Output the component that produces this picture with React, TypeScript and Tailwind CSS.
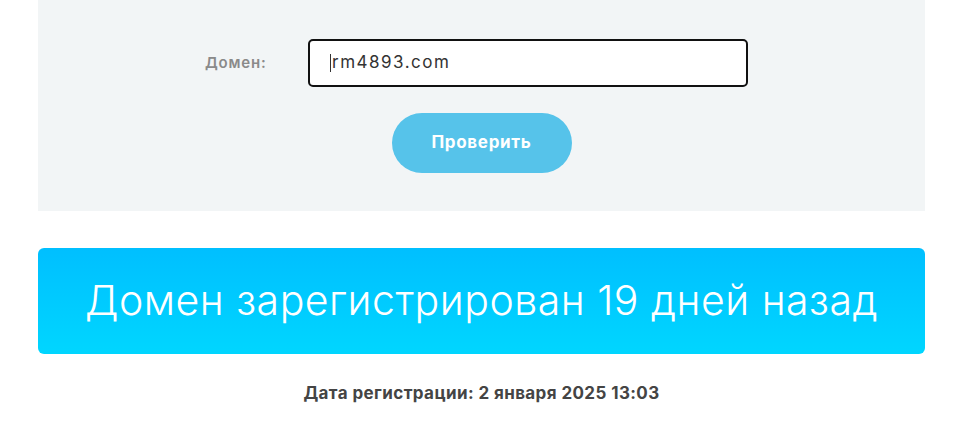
export default function App() {
  return (
    <div className="min-h-[446px] bg-white font-['Inter','Noto_Sans',sans-serif]">
      <div className="ml-[38px] w-[887px]">
        <section className="flex h-[211px] flex-col items-center bg-[#f2f5f6] pt-[39px]">
          <div className="flex w-full items-center">
            <label className="ml-[167px] w-[103px] text-[15px] font-semibold tracking-[0.8px] text-[#8a8a8a]">Домен:</label>
            <div className="flex h-[48px] w-[440px] items-center rounded-[5px] border-2 border-[#111] bg-white pl-[20px] text-[17px] tracking-[1.5px] text-[#333]">
              <span className="mr-px h-[18px] w-px bg-[#333]" />
              rm4893.com
            </div>
          </div>
          <button
            type="button"
            className="mt-[26px] h-[60px] w-[180px] rounded-full bg-[#56c3ea] text-[17px] font-bold tracking-[0.7px] text-white"
          >
            Проверить
          </button>
        </section>

        <div className="mt-[37px] flex h-[106px] items-center justify-center rounded-[6px] bg-gradient-to-b from-[#00bfff] to-[#00d6ff]">
          <h1 className="text-[41px] font-light tracking-[0.5px] text-white">Домен зарегистрирован 19 дней назад</h1>
        </div>

        <p className="mt-[27px] text-center text-[17px] font-bold tracking-[0.4px] text-[#444]">Дата регистрации: 2 января 2025 13:03</p>
      </div>
    </div>
  );
}
